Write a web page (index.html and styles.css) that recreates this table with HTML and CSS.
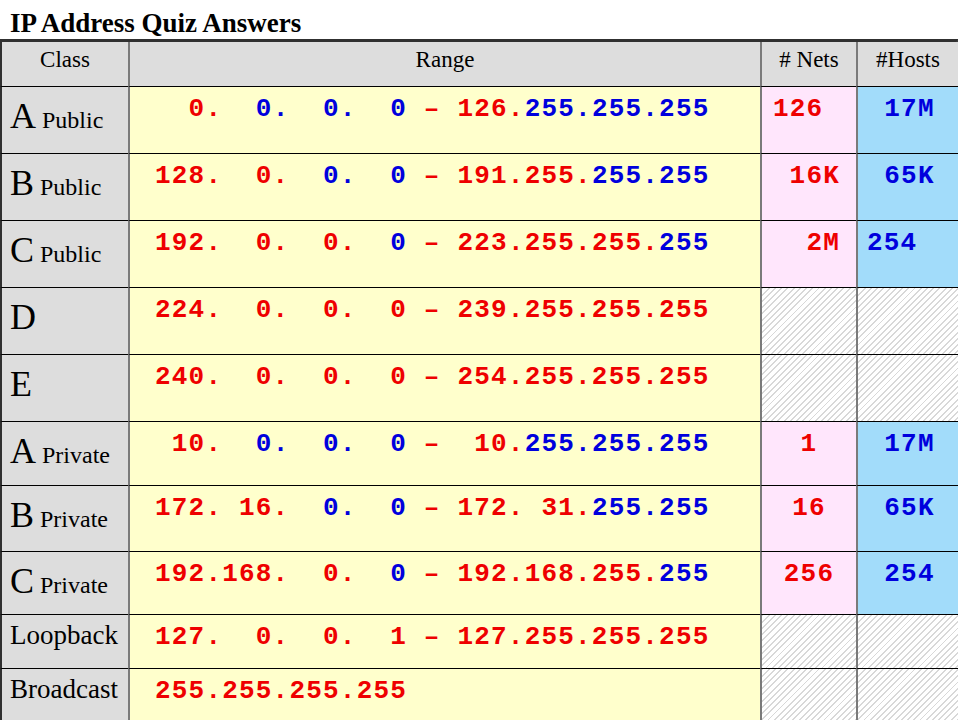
FILE: index.html
```html
<!DOCTYPE html>
<html>
<head>
<meta charset="utf-8">
<title>IP Address Quiz Answers</title>
<link rel="stylesheet" href="styles.css">
</head>
<body>
<h1 class="title">IP Address Quiz Answers</h1>
<div class="grid">
  <div class="cell hd first">Class</div>
  <div class="cell hd">Range</div>
  <div class="cell hd">#&nbsp;Nets</div>
  <div class="cell hd">#Hosts</div>

  <div class="cell cls first"><span class="big">A</span> Public</div>
  <div class="cell rng"><span class="r">  0.</span><span class="b">  0.  0.  0</span><span class="r"> – 126.</span><span class="b">255.255.255</span></div>
  <div class="cell nets left"><span class="r">126</span></div>
  <div class="cell hosts"><span class="b">17M</span></div>

  <div class="cell cls first"><span class="big">B</span> Public</div>
  <div class="cell rng"><span class="r">128.  0.</span><span class="b">  0.  0</span><span class="r"> – 191.255.</span><span class="b">255.255</span></div>
  <div class="cell nets right"><span class="r">16K</span></div>
  <div class="cell hosts"><span class="b">65K</span></div>

  <div class="cell cls first"><span class="big">C</span> Public</div>
  <div class="cell rng"><span class="r">192.  0.  0.</span><span class="b">  0</span><span class="r"> – 223.255.255.</span><span class="b">255</span></div>
  <div class="cell nets right"><span class="r">2M</span></div>
  <div class="cell hosts left"><span class="b">254</span></div>

  <div class="cell cls first"><span class="big">D</span></div>
  <div class="cell rng"><span class="r">224.  0.  0.  0 – 239.255.255.255</span></div>
  <div class="cell hatch"></div>
  <div class="cell hatch"></div>

  <div class="cell cls first"><span class="big">E</span></div>
  <div class="cell rng"><span class="r">240.  0.  0.  0 – 254.255.255.255</span></div>
  <div class="cell hatch"></div>
  <div class="cell hatch"></div>

  <div class="cell cls first"><span class="big">A</span> Private</div>
  <div class="cell rng"><span class="r"> 10.</span><span class="b">  0.  0.  0</span><span class="r"> –  10.</span><span class="b">255.255.255</span></div>
  <div class="cell nets"><span class="r">1</span></div>
  <div class="cell hosts"><span class="b">17M</span></div>

  <div class="cell cls first"><span class="big">B</span> Private</div>
  <div class="cell rng"><span class="r">172. 16.</span><span class="b">  0.  0</span><span class="r"> – 172. 31.</span><span class="b">255.255</span></div>
  <div class="cell nets"><span class="r">16</span></div>
  <div class="cell hosts"><span class="b">65K</span></div>

  <div class="cell cls first"><span class="big">C</span> Private</div>
  <div class="cell rng"><span class="r">192.168.  0.</span><span class="b">  0</span><span class="r"> – 192.168.255.</span><span class="b">255</span></div>
  <div class="cell nets"><span class="r">256</span></div>
  <div class="cell hosts"><span class="b">254</span></div>

  <div class="cell cls small first">Loopback</div>
  <div class="cell rng"><span class="r">127.  0.  0.  1 – 127.255.255.255</span></div>
  <div class="cell hatch"></div>
  <div class="cell hatch"></div>

  <div class="cell cls small first">Broadcast</div>
  <div class="cell rng"><span class="r">255.255.255.255</span></div>
  <div class="cell hatch"></div>
  <div class="cell hatch"></div>
</div>
</body>
</html>
```
FILE: styles.css
```css
html, body {
  margin: 0;
  padding: 0;
  background: #ffffff;
  overflow: hidden;
}
body {
  width: 960px;
  height: 720px;
  font-family: "Liberation Serif", "Times New Roman", serif;
  color: #000;
}
.title {
  box-sizing: border-box;
  height: 39px;
  margin: 0;
  padding: 8px 0 0 10px;
  font-size: 27px;
  line-height: 30px;
  font-weight: bold;
}
.grid {
  display: grid;
  width: 958px;
  grid-template-columns: 128px 632px 96px 102px;
  grid-template-rows: 44px 67px 67px 67px 67px 67px 64px 66px 63px 54px 56px;
  border-top: 3px solid #303030;
  border-right: 2px solid #404040;
  box-sizing: border-box;
}
.cell {
  box-sizing: border-box;
  border-top: 1px solid #000;
  border-left: 2px solid #7a7a7a;
  overflow: hidden;
}
.cell.first {
  border-left: 2px solid #303030;
}
.hd {
  border-top: none;
  background: #dddddd;
  font-size: 23px;
  line-height: 26px;
  padding-top: 5px;
  text-align: center;
}
.cls {
  background: #dddddd;
  font-size: 24px;
  line-height: 40px;
  padding: 9px 0 0 8px;
  white-space: nowrap;
}
.cls .big {
  font-size: 36px;
}
.cls.small {
  font-size: 27px;
  line-height: 30px;
  padding-top: 5px;
}
.rng, .nets, .hosts {
  font-family: "Liberation Mono", "Courier New", monospace;
  font-weight: bold;
  font-size: 26px;
  letter-spacing: 1.2px;
  line-height: 32px;
  padding-top: 6px;
  white-space: pre;
}
.rng {
  background: #ffffcc;
  padding-left: 25px;
}
.nets {
  background: #ffe6fc;
  text-align: center;
}
.hosts {
  background: #a2dcfa;
  text-align: center;
  padding-left: 3px;
}
.nets.left {
  text-align: left;
  padding-left: 11px;
}
.nets.right {
  text-align: right;
  padding-right: 16px;
}
.hosts.left {
  text-align: left;
  padding-left: 9px;
}
.hatch {
  background: repeating-linear-gradient(135deg, #d8d8d8 0 1.4px, #ffffff 1.4px 4.4px);
}
.r { color: #ee0000; }
.b { color: #0000dd; }
```
